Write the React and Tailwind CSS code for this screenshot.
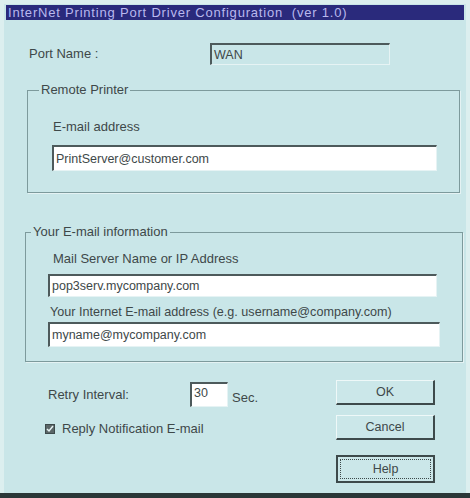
import React from 'react';

const sunken = 'border-t-2 border-l-2 border-r border-b border-t-[#4d5a5b] border-l-[#4d5a5b] border-r-[#e6f3f4] border-b-[#e6f3f4]';
const raised = 'border-t border-l border-r-2 border-b-2 border-t-[#eef8f8] border-l-[#eef8f8] border-r-[#3d4a4b] border-b-[#3d4a4b]';

const Field = ({ value, className = '' }) => (
  <div className={`${sunken} bg-white flex items-center pl-[2px] text-[12.5px] text-[#3e4849] ${className}`}>
    {value}
  </div>
);

const App = () => {
  return (
    <div className="w-[470px] h-[498px] bg-[#dcefef] flex flex-col font-['Liberation_Sans',Arial,sans-serif] text-[13px] text-[#3e4849] leading-[14px]">
      <div className="flex-1 ml-[4px] mr-[4px] mt-[4px] bg-[#c9e6e8] flex flex-col">
        {/* title bar */}
        <div className="mx-[2px] mt-[1px] h-[15px] bg-[#2a2a7c] text-[#b9b9ee] px-[2px] leading-[15px] text-[13px] tracking-[0.8px] whitespace-pre">
          InterNet Printing Port Driver Configuration  (ver 1.0)
        </div>

        {/* port name */}
        <div className="flex items-center mt-[23px] pl-[25px]">
          <span className="w-[181px]">Port Name :</span>
          <div className={`${sunken} border-r-[#dcefef] border-b-[#dcefef] w-[180px] h-[22px] flex items-center pl-[2px] text-[12.5px]`}>WAN</div>
        </div>

        {/* remote printer */}
        <fieldset className="ml-[23px] w-[433px] mt-[18px] p-0 border border-[#7d9a9c] shadow-[1px_1px_0_#e4f2f3]">
          <legend className="ml-[11px] px-[2px] leading-[14px]">Remote Printer</legend>
          <div className="ml-[25px] mt-[23px]">E-mail address</div>
          <Field value="PrintServer@customer.com" className="ml-[24px] mt-[11px] w-[385px] h-[26px]" />
          <div className="h-[21px]" />
        </fieldset>

        {/* email info */}
        <fieldset className="ml-[21px] w-[438px] mt-[32px] p-0 border border-[#7d9a9c] shadow-[1px_1px_0_#e4f2f3]">
          <legend className="ml-[5px] px-[2px] leading-[14px]">Your E-mail information</legend>
          <div className="ml-[27px] mt-[13px]">Mail Server Name or IP Address</div>
          <Field value="pop3serv.mycompany.com" className="ml-[22px] mt-[8px] w-[389px] h-[23px]" />
          <div className="ml-[24px] mt-[8px] text-[12.6px]">Your Internet E-mail address (e.g. username@company.com)</div>
          <Field value="myname@mycompany.com" className="ml-[22px] mt-[3px] w-[392px] h-[25px]" />
          <div className="h-[14px]" />
        </fieldset>

        {/* bottom */}
        <div className="flex">
          <div className="flex flex-col">
            <div className="flex items-center mt-[20px] ml-[44px]">
              <span className="w-[142px]">Retry Interval:</span>
              <Field value="30" className="w-[38px] h-[25px] items-start pt-[2px]" />
              <span className="ml-[4px] mt-[6px]">Sec.</span>
            </div>
            <div className="flex items-center mt-[15px] ml-[41px]">
              <span className="w-[10px] h-[10px] border border-[#3d4a4b] bg-[#5b6667] flex items-center justify-center">
                <svg width="8" height="8" viewBox="0 0 8 8">
                  <path d="M1 4 L3 6 L7 1" stroke="#e6f3f4" strokeWidth="1.5" fill="none" />
                </svg>
              </span>
              <span className="ml-[7px]">Reply Notification E-mail</span>
            </div>
          </div>
          <div className="ml-auto mr-[31px] flex flex-col">
            <button className={`${raised} mt-[18px] w-[99px] h-[25px] bg-[#cbe7e9] text-[12.5px]`}>OK</button>
            <button className={`${raised} mt-[10px] w-[99px] h-[25px] bg-[#cbe7e9] text-[12.5px]`}>Cancel</button>
            <button className="mt-[15px] w-[99px] h-[28px] bg-[#cbe7e9] text-[12.5px] border-2 border-[#3d4a4b] p-[2px]">
              <span className="flex items-center justify-center w-full h-full border border-dotted border-[#3d4a4b]">Help</span>
            </button>
          </div>
        </div>
      </div>
      <div className="h-[5px] bg-[#2b3738]" />
    </div>
  );
};

export default App;
